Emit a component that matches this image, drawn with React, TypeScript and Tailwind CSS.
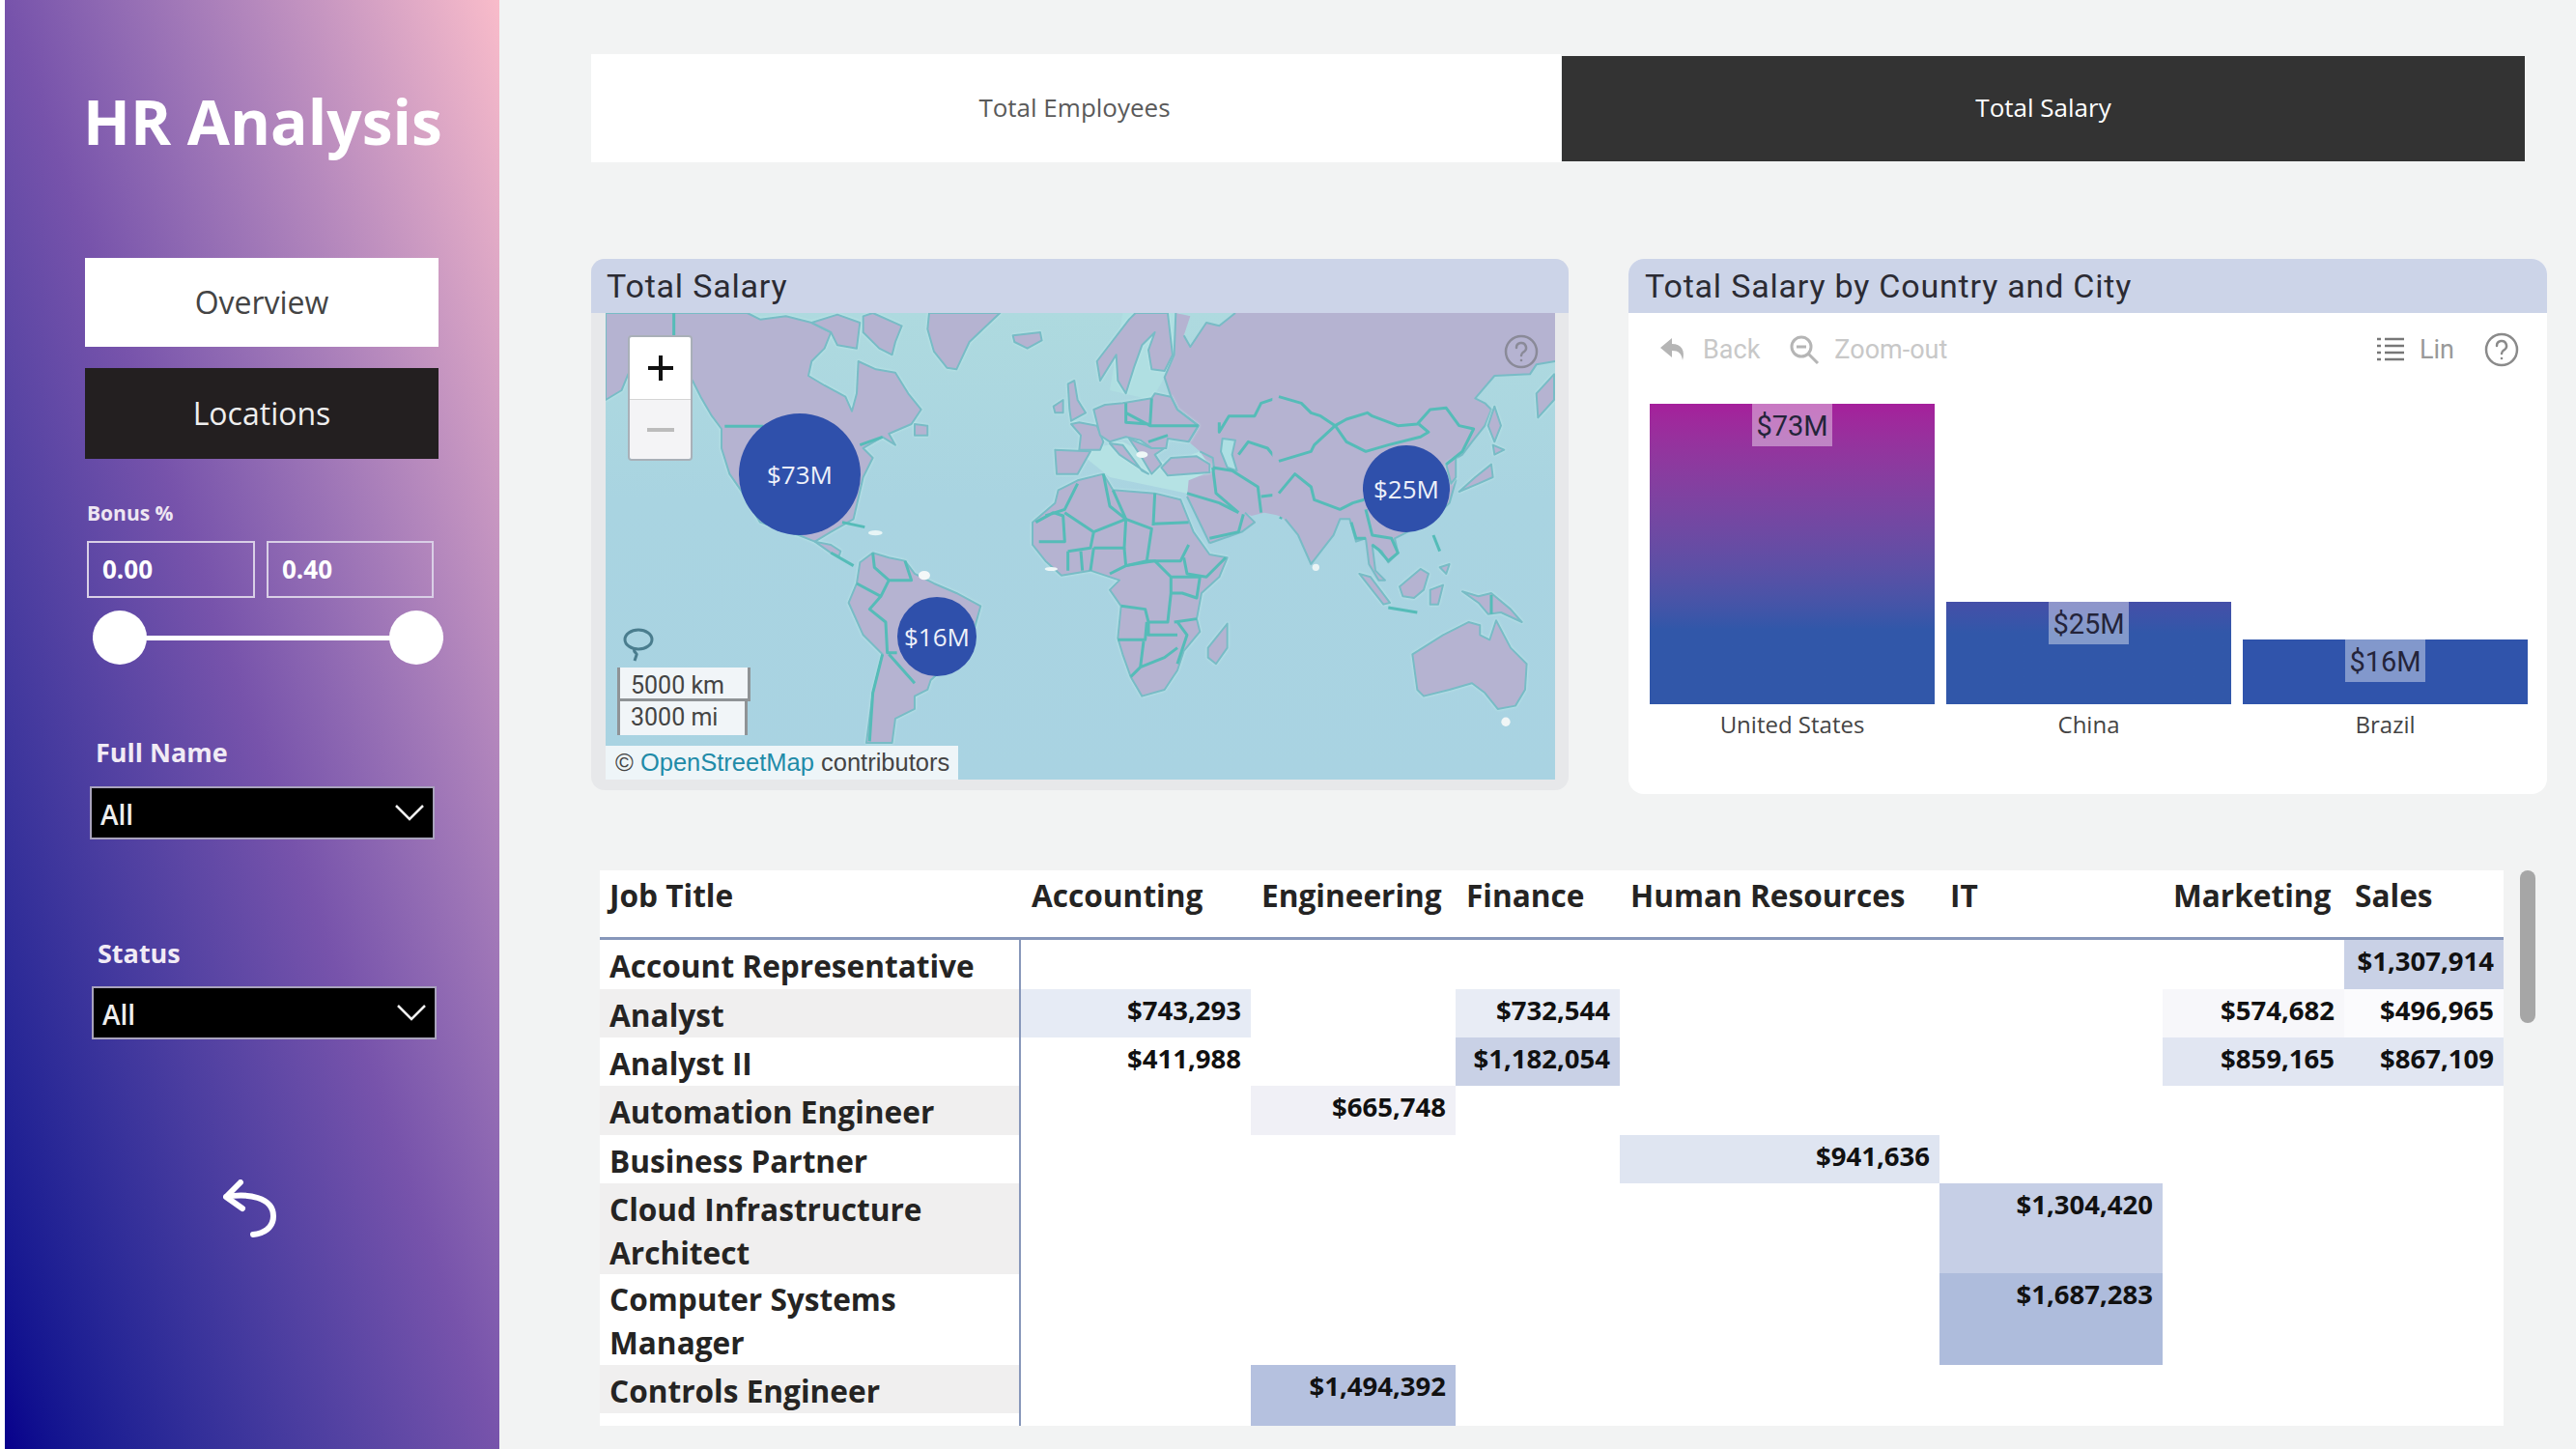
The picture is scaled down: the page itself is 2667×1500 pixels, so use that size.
function WorldMap() {
  const land = "#b5b3d1"
  const coast = "#78bcc6"
  const line = "#55bcb8"
  return (
    <svg viewBox="0 0 983 483" className="absolute inset-0 w-[983px] h-[483px] blur-[0.5px]">
      <defs>
        <linearGradient id="ocean" x1="0" y1="0" x2="0" y2="1">
          <stop offset="0" stopColor="#aedadf" />
          <stop offset="0.4" stopColor="#a9d4e1" />
          <stop offset="1" stopColor="#a9d3e2" />
        </linearGradient>
      </defs>
      <rect width="983" height="483" fill="url(#ocean)" />
      {/* Americas */}
      <g transform="scale(0.3333)">
        <g fill={land} stroke={coast} strokeWidth="6" strokeLinejoin="round" className="drop-shadow-[0_0_4px_#c0eaea]">
          <path d="M0,0 L440,0 L480,20 L560,10 L640,30 L700,60 L680,110 L640,150 L630,195 L680,225 L745,260 L765,305 L780,250 L785,150 L840,175 L900,185 L940,250 L980,300 L950,345 L880,375 L900,410 L860,385 L800,420 L830,450 L800,510 L770,640 L700,680 L650,710 L600,690 L480,650 L420,550 L385,500 L360,420 L360,360 L330,320 L295,260 L270,210 L240,170 L70,190 L50,240 L0,270 Z" />
          <path d="M640,30 L720,5 L790,30 L780,110 L720,100 L700,60 Z" />
          <path d="M800,10 L830,0 L920,40 L900,90 L890,130 L850,110 L800,60 Z" />
          <path d="M1005,0 L1225,0 L1130,90 L1090,175 L1060,170 L1020,120 L1000,50 Z" />
          <path d="M1265,70 L1350,60 L1355,85 L1310,110 L1270,90 Z" />
          <path d="M960,345 L1000,350 L1000,380 L960,380 Z" />
          <path d="M650,710 L700,720 L730,740 L725,755 L700,745 Z" />
          <path d="M790,775 L830,745 L880,760 L930,770 L960,810 L1020,840 L1090,870 L1165,910 L1140,1000 L1100,1060 L1010,1140 L1000,1170 L960,1190 L960,1230 L900,1260 L890,1335 L810,1335 L830,1180 L860,1060 L800,1000 L755,900 L780,840 Z" />
        </g>
        <g fill="none" stroke={line} strokeWidth="9" strokeLinejoin="round">
          <path d="M212,0 L212,70 M370,352 L490,352 M790,410 L860,385" />
          <path d="M700,745 L770,785 M735,650 L805,665" />
          <path d="M830,745 L835,790 L880,830 L855,880 L780,840 M930,770 L950,830 L880,830 M855,880 L820,920 L870,960 L875,1055 L905,1055" />
          <path d="M860,1060 L830,1180 L820,1330 M880,1060 L960,1150" />
        </g>
        <ellipse cx="838" cy="683" rx="22" ry="8" fill="#e8f5f6" />
        <ellipse cx="990" cy="815" rx="18" ry="14" fill="#f4f8f8" />
      </g>
      {/* Mediterranean, Europe, Africa, West Asia */}
      <g transform="translate(422,0) scale(0.3333)">
        <path d="M200,430 L340,400 L480,470 L580,430 L620,490 L540,560 L300,510 Z" fill="#b5e2e4" />
        <path d="M520,0 L340,0 L300,240 L430,270 L470,200 Z" fill="#b0dfe2" />
        <path d="M505,0 L550,10 L530,70 L550,105 L600,30 L640,40 L690,0 L900,0 L900,650 L860,660 L830,630 L780,620 L740,630 L720,620 L750,650 L710,680 L610,715 L540,570 L545,520 L620,490 L580,430 L545,400 L575,350 L510,300 L490,260 L470,200 L500,130 Z" fill={land} />
        <path d="M650,390 L690,395 L680,440 L695,490 L665,480 L645,430 Z" fill="#addfe3" />
        <g fill={land} stroke={coast} strokeWidth="6" strokeLinejoin="round" className="drop-shadow-[0_0_4px_#c0eaea]">
          <path d="M60,650 L130,590 L140,550 L200,520 L280,500 L310,550 L440,560 L520,580 L560,680 L610,750 L665,760 L640,820 L585,870 L570,950 L580,990 L530,1050 L510,1110 L470,1170 L400,1190 L365,1130 L340,1060 L325,1010 L335,910 L300,860 L330,830 L240,800 L150,815 L100,770 L60,720 Z" />
          <path d="M260,150 L360,20 L380,0 L480,0 L495,130 L470,180 L430,175 L420,115 L440,60 L400,100 L375,170 L350,250 L325,210 L320,130 L270,210 Z" />
          <path d="M130,425 L240,430 L200,500 L135,500 Z" />
          <path d="M205,340 L260,350 L280,400 L270,425 L205,425 L210,380 L180,345 Z" />
          <path d="M170,220 L190,210 L200,270 L225,310 L180,335 L175,300 Z" />
          <path d="M125,290 L155,270 L155,310 L130,310 Z" />
          <path d="M250,300 L285,285 L340,280 L430,265 L440,250 L490,260 L510,300 L575,350 L545,400 L480,390 L475,420 L430,420 L395,395 L350,385 L300,400 L270,380 Z" />
          <path d="M300,405 L340,410 L400,490 L420,500 L390,480 L330,440 Z" />
          <path d="M360,390 L430,420 L470,420 L440,440 L460,470 L430,500 L400,450 Z" />
          <path d="M460,480 L490,450 L570,445 L610,470 L610,495 L540,500 L480,505 Z" />
          <path d="M605,1040 L665,965 L665,1040 L630,1090 L605,1070 Z" />
        </g>
        <g fill="none" stroke={coast} strokeWidth="6" strokeLinejoin="round">
          <path d="M505,0 L500,130 L470,200 L490,260 L510,300 L575,350 L545,400 M580,430 L620,450 L625,490 M610,715 L710,680 L750,650 L720,620 M540,570 L610,715 M530,70 L550,105 L600,30 L640,40 L690,0" />
          <path d="M650,390 L690,395 L680,440 L695,490 L665,480 L645,430 Z" />
        </g>
        <g fill="none" stroke={line} strokeWidth="9" strokeLinejoin="round">
          <path d="M100,630 L160,610 L200,530 M280,500 L300,600 L350,640 L250,680 L160,620 M250,680 L240,730 L170,740 M70,650 L125,620 L155,630 L160,710 L80,710" />
          <path d="M350,640 L345,730 L250,730 M350,640 L430,670 L415,770 L350,785 M310,550 L350,640 M440,560 L435,660 M435,655 L545,650 M415,770 L440,770 L520,770 L545,720" />
          <path d="M530,760 L540,810 L600,820 L660,760 M250,730 L240,800 M345,730 L350,785 L300,810" />
          <path d="M350,785 L440,770 L490,820 L490,870 L480,960 L420,960 L410,920 L335,910 M490,820 L580,820 L570,885 L525,870 L490,870 M570,950 L500,960" />
          <path d="M325,1015 L410,1015 L415,960 M420,960 L420,1000 L510,1000 M405,1020 L395,1100 L470,1070 L510,1040 M365,1130 L395,1100 M510,960 L540,1000 L510,1090" />
          <path d="M170,740 L170,800 M210,740 L215,800" />
          <path d="M430,265 L425,350 L350,310 M350,280 L350,340 L420,345 M425,350 L575,350 M420,400 L480,380" />
          <path d="M620,480 L630,560 L700,620 M620,480 L680,490 L760,540 L770,620 M540,560 L640,590 L700,620 M610,700 L700,680 L715,625" />
          <path d="M640,340 L640,370 L670,320 L750,320 L770,280 L830,260 L870,270 M700,440 L730,400 L790,420 L830,470 M770,570 L850,560 L870,500 M830,640 L850,590 L860,520 L830,480 L870,440" />
          <path d="M825,455 L870,445 L870,480 L830,475 Z" fill={line} />
        </g>
        <ellipse cx="400" cy="440" rx="18" ry="10" fill="#eef7f7" />
        <ellipse cx="118" cy="795" rx="20" ry="6" fill="#eef7f7" />
      </g>
      {/* East Asia, Australia */}
      <g transform="translate(697,0) scale(0.3333)">
        <path d="M-20,0 L860,0 L860,150 L800,160 L780,190 L670,195 L610,265 L640,280 L660,300 L640,350 L600,400 L570,440 L520,470 L550,520 L530,590 L480,640 L400,680 L360,700 L370,745 L340,775 L320,740 L290,720 L300,800 L330,830 L310,830 L280,780 L270,700 L240,710 L220,640 L190,640 L170,690 L100,780 L60,690 L20,640 L-20,620 Z" fill={land} />
        <path d="M860,150 L800,160 L780,190 L670,195 L610,265 L640,280 L660,300 L640,350 L600,400 L570,440 L520,470 L550,520 L530,590 L480,640 L400,680 L360,700 L370,745 L340,775 L320,740 L290,720 L300,800 L330,830 L310,830 L280,780 L270,700 L240,710 L220,640 L190,640 L170,690 L100,780 L60,690 L20,640" fill="none" stroke={coast} strokeWidth="6" strokeLinejoin="round" />
        <g fill={land} stroke={coast} strokeWidth="6" strokeLinejoin="round" className="drop-shadow-[0_0_4px_#c0eaea]">
          <path d="M800,250 L855,190 L855,270 L805,325 Z" />
          <path d="M560,555 L610,510 L660,470 L665,510 L620,530 Z" />
          <path d="M665,410 L700,425 L670,440 Z" />
          <path d="M670,290 L690,350 L670,400 L650,350 Z" />
          <path d="M520,470 L550,450 L550,510 L535,530 Z" />
          <path d="M500,790 L530,780 L520,810 Z" />
          <path d="M375,850 L440,795 L465,810 L450,860 L420,885 L385,880 Z" />
          <path d="M470,860 L510,845 L495,905 L470,905 Z" />
          <path d="M250,810 L285,820 L345,900 L325,905 Z" />
          <path d="M570,865 L620,880 L660,870 L720,920 L755,960 L690,930 L650,935 L620,900 Z" />
          <path d="M415,1060 L510,1000 L590,960 L625,970 L625,1000 L655,1015 L675,955 L720,1040 L770,1090 L765,1170 L735,1220 L680,1230 L640,1180 L600,1150 L530,1170 L450,1190 L430,1170 Z" />
        </g>
        <g fill="none" stroke={line} strokeWidth="9" strokeLinejoin="round">
          <path d="M0,260 L70,280 L100,310 L130,320 L175,350 L210,330 L275,310 L290,320 L370,350 L430,345 L470,300 L520,295 L560,350 L605,360 L570,430 L520,470" />
          <path d="M175,350 L210,400 L270,430 L340,410 L440,385 L465,370 L435,345 M175,350 L110,410 L100,430 L0,460" />
          <path d="M0,560 L50,500 L100,540 L110,580 L190,610 L230,590 L265,580 M225,650 L240,700 L270,700 M270,610 L290,690 L350,700 L370,745 L340,770 L310,735 L290,720" />
          <path d="M480,690 L500,740 M340,915 L430,930 M660,875 L660,935" />
        </g>
        <circle cx="705" cy="1270" r="14" fill="#f1f6f6" />
        <circle cx="115" cy="790" r="11" fill="#eaf4f5" />
      </g>
    </svg>
  )
}

function HelpIcon({ className }: { className: string }) {
  return (
    <svg viewBox="0 0 36 36" className={className} fill="none" stroke="currentColor" strokeWidth="2.5">
      <circle cx="18" cy="18" r="16" />
      <path d="M13 14a5 5 0 1 1 7.5 4.3c-1.6 1-2.5 1.8-2.5 3.7" strokeLinecap="round" />
      <circle cx="18" cy="27" r="1.3" fill="currentColor" stroke="none" />
    </svg>
  )
}

function Bubble({ label, className }: { label: string; className: string }) {
  return (
    <div className={`absolute rounded-full bg-[#2f50ab] flex items-center justify-center text-[26px] text-[#eef1fa] ${className}`}>
      {label}
    </div>
  )
}

function MapCard() {
  return (
    <div className="w-[1012px] h-[550px] rounded-[14px] bg-[#e7e8ea] overflow-hidden flex flex-col">
      <div className="h-[56px] bg-[#ccd4e8] pl-[16px] flex items-center text-[34px] tracking-[0.8px] text-[#2b2b33] font-['Roboto',sans-serif]">
        Total Salary
      </div>
      <div className="relative ml-[15px] w-[983px] h-[483px] overflow-hidden">
        <WorldMap />
        <Bubble label="$73M" className="left-[138px] top-[104px] w-[126px] h-[126px]" />
        <Bubble label="$25M" className="left-[784px] top-[137px] w-[90px] h-[90px]" />
        <Bubble label="$16M" className="left-[302px] top-[294px] w-[82px] h-[82px]" />
        <HelpIcon className="absolute left-[930px] top-[22px] w-[36px] h-[36px] text-[#8a8a98]" />
        <div className="absolute left-[23px] top-[23px] w-[67px] h-[130px] rounded-[4px] border-2 border-[#a9b0b8] overflow-hidden flex flex-col">
          <div className="h-[65px] bg-white border-b border-[#d5d5d5] flex items-center justify-center">
            <svg viewBox="0 0 28 28" className="w-[28px] h-[28px]" fill="none" stroke="#111" strokeWidth="4">
              <path d="M14 1v26M1 14h26" />
            </svg>
          </div>
          <div className="flex-1 bg-[#f4f4f6] flex items-center justify-center">
            <div className="w-[28px] h-[4px] bg-[#bcbcbc]" />
          </div>
        </div>
        <svg viewBox="0 0 32 36" className="absolute left-[18px] top-[326px] w-[32px] h-[36px]" fill="none" stroke="#4a7d8e" strokeWidth="3">
          <ellipse cx="16" cy="12" rx="14" ry="10" />
          <path d="M12 22c-2 3 3 4 2 6l-2 6" />
        </svg>
        <div className="absolute left-[12px] top-[367px] flex flex-col text-[25px] leading-[34px] text-[#444] font-['Roboto',sans-serif]">
          <div className="w-[138px] h-[35px] bg-[#f1f5f8] border-x-[3px] border-b-[3px] border-[#8f9396] pl-[11px] pt-[2px]">5000 km</div>
          <div className="w-[135px] h-[35px] bg-[#f1f5f8] border-x-[3px] border-[#8f9396] pl-[11px]">3000 mi</div>
        </div>
        <div className="absolute left-0 bottom-0 w-[365px] h-[35px] bg-[#eef5f8] pl-[10px] text-[25.5px] leading-[35px] whitespace-nowrap text-[#444] font-['Liberation_Sans',sans-serif]">
          © <span className="text-[#1f8ba8]">OpenStreetMap</span> contributors
        </div>
      </div>
    </div>
  )
}

function Bar({ name, value, barClass }: { name: string; value: string; barClass: string }) {
  return (
    <div className="w-[295px] flex flex-col items-center">
      <div className={`w-full flex justify-center ${barClass}`}>
        <div className="w-[83px] h-[44px] pt-[3px] bg-white/40 flex items-center justify-center text-[29px] text-[#24243a] font-['Roboto',sans-serif]">
          {value}
        </div>
      </div>
      <div className="h-[42px] pt-[4px] text-[24px] leading-[34px] text-[#444]">{name}</div>
    </div>
  )
}

function BarCard() {
  return (
    <div className="w-[951px] h-[554px] rounded-[16px] bg-white overflow-hidden flex flex-col">
      <div className="h-[56px] bg-[#ccd4e8] pl-[17px] flex items-center text-[34px] tracking-[0.8px] text-[#2b2b33] font-['Roboto',sans-serif]">
        Total Salary by Country and City
      </div>
      <div className="h-[76px] pl-[32px] pr-[29px] flex items-center text-[27px] text-[#c8c8c8] font-['Roboto',sans-serif]">
        <svg viewBox="0 0 30 30" className="w-[30px] h-[30px]" fill="#b5b5b5">
          <path d="M13 3 1 13l12 10v-7c7 0 10 3 11 10 3-10-1-17-11-17Z" />
        </svg>
        <span className="ml-[15px]">Back</span>
        <svg viewBox="0 0 32 32" className="ml-[30px] w-[32px] h-[32px]" fill="none" stroke="#b5b5b5" strokeWidth="3">
          <circle cx="13" cy="13" r="10" />
          <path d="M20 20l10 10M8 13h10" />
        </svg>
        <span className="ml-[15px]">Zoom-out</span>
        <svg viewBox="0 0 28 28" className="ml-auto w-[28px] h-[28px]" fill="none" stroke="#777" strokeWidth="2.5">
          <path d="M8 3h20M8 10h20M8 17h20M8 24h20M0 3h4M0 10h4M0 17h4M0 24h4" />
        </svg>
        <span className="ml-[16px] text-[#999]">Lin</span>
        <HelpIcon className="ml-[31px] w-[36px] h-[36px] text-[#8a8a8a]" />
      </div>
      <div className="pl-[22px] flex items-end gap-[12px] h-[371px]">
        <Bar name="United States" value="$73M" barClass="h-[311px] bg-linear-to-b from-[#a51f9b] to-[#3157a9] to-[75%]" />
        <Bar name="China" value="$25M" barClass="h-[106px] bg-linear-to-b from-[#454fa8] to-[#3157a9] to-[30%]" />
        <Bar name="Brazil" value="$16M" barClass="h-[67px] bg-[#3054ab]" />
      </div>
    </div>
  )
}

type Cell = { text?: string; bg?: string }

const headers = ["Accounting", "Engineering", "Finance", "Human Resources", "IT", "Marketing", "Sales"]
const gridCols = "grid grid-cols-[436px_238px_212px_170px_331px_231px_188px_165px]"

const rows: { title: string[]; h: string; zebra?: boolean; cells: Cell[] }[] = [
  { title: ["Account Representative"], h: "h-[51px]", cells: [{}, {}, {}, {}, {}, {}, { text: "$1,307,914", bg: "bg-[#c9d1e6]" }] },
  { title: ["Analyst"], h: "h-[50px]", zebra: true, cells: [{ text: "$743,293", bg: "bg-[#e6ebf5]" }, {}, { text: "$732,544", bg: "bg-[#e8ecf5]" }, {}, {}, { text: "$574,682", bg: "bg-[#f7f7fa]" }, { text: "$496,965", bg: "bg-[#fbfbfd]" }] },
  { title: ["Analyst II"], h: "h-[50px]", cells: [{ text: "$411,988" }, {}, { text: "$1,182,054", bg: "bg-[#c9d1e6]" }, {}, {}, { text: "$859,165", bg: "bg-[#e1e6f2]" }, { text: "$867,109", bg: "bg-[#e1e6f2]" }] },
  { title: ["Automation Engineer"], h: "h-[51px]", zebra: true, cells: [{}, { text: "$665,748", bg: "bg-[#f0f0f6]" }, {}, {}, {}, {}, {}] },
  { title: ["Business Partner"], h: "h-[50px]", cells: [{}, {}, {}, { text: "$941,636", bg: "bg-[#dfe5f1]" }, {}, {}, {}] },
  { title: ["Cloud Infrastructure", "Architect"], h: "h-[93px]", zebra: true, cells: [{}, {}, {}, {}, { text: "$1,304,420", bg: "bg-[#c6cfe6]" }, {}, {}] },
  { title: ["Computer Systems", "Manager"], h: "h-[95px]", cells: [{}, {}, {}, {}, { text: "$1,687,283", bg: "bg-[#aebcdc]" }, {}, {}] },
  { title: ["Controls Engineer"], h: "h-[50px]", zebra: true, cells: [{}, { text: "$1,494,392", bg: "bg-[#b5c1df]" }, {}, {}, {}, {}, {}] },
]

function SalaryTable() {
  return (
    <div className="ml-[9px] mt-[79px] flex items-start">
      <div className="w-[1971px] h-[575px] bg-white overflow-hidden">
        <div className={`${gridCols} h-[72px] border-b-[3px] border-[#8797ba] text-[31.6px] leading-[44px] font-bold text-[#252423]`}>
          <div className="pl-[10px] pt-[4px]">Job Title</div>
          {headers.map((h) => (
            <div key={h} className="pl-[11px] pt-[4px] whitespace-nowrap">{h}</div>
          ))}
        </div>
        {rows.map((r) => (
          <div key={r.title[0]} className={`${gridCols} ${r.h}`}>
            <div className={`pl-[10px] pt-[4px] text-[31.6px] leading-[45px] font-bold text-[#252423] border-r-2 border-[#8797ba] ${r.zebra ? "bg-[#f0efef]" : ""}`}>
              {r.title.map((t) => (
                <div key={t} className="whitespace-nowrap">{t}</div>
              ))}
            </div>
            {r.cells.map((c, i) => (
              <div key={i} className={`pr-[10px] pt-[4px] text-right text-[27.5px] leading-[36px] font-bold text-[#111] ${c.bg ?? ""}`}>
                {c.text}
              </div>
            ))}
          </div>
        ))}
        <div className={`${gridCols} h-[13px]`}>
          <div className="border-r-2 border-[#8797ba]" />
          <div />
          <div className="bg-[#b5c1df]" />
        </div>
      </div>
      <div className="ml-[17px] w-[16px] h-[158px] rounded-full bg-[#a6a6a6]" />
    </div>
  )
}

function Filter({ className }: { className: string }) {
  return (
    <div className={`h-[55px] w-[357px] bg-black border-2 border-[#a9a3bd] flex items-center justify-between pl-[9px] pr-[9px] text-[28px] font-semibold text-[#eeeeee] ${className}`}>
      <span className="pt-[3px]">All</span>
      <svg viewBox="0 0 30 17" className="w-[30px] h-[17px]" fill="none" stroke="#f0f0f0" strokeWidth="2.5">
        <path d="M1 1l14 14L29 1" />
      </svg>
    </div>
  )
}

function Sidebar() {
  return (
    <div className="w-[512px] h-[1500px] ml-[5px] shrink-0 pl-[83px] flex flex-col items-start bg-linear-to-tr from-[#08008c] via-[#7753ab] to-[#f9bcca] text-white">
      <div className="mt-[86px] -ml-[2px] h-[81px] text-[64px] leading-[80px] font-bold whitespace-nowrap">HR Analysis</div>
      <div className="mt-[100px] w-[366px] h-[92px] bg-white flex items-center justify-center text-[32px] text-[#444444]">Overview</div>
      <div className="mt-[22px] w-[366px] h-[94px] bg-[#231f20] flex items-center justify-center text-[32px] text-[#eeeeee]">Locations</div>
      <div className="mt-[44px] ml-[2px] text-[21px] leading-[24px] font-bold text-[#eee6f2]">Bonus %</div>
      <div className="mt-[17px] ml-[2px] flex gap-[12px] text-[26px] font-bold">
        <div className="w-[174px] h-[59px] border-2 border-[#d9cfe6] pl-[14px] flex items-center">0.00</div>
        <div className="w-[173px] h-[59px] border-2 border-[#d9cfe6] pl-[14px] flex items-center">0.40</div>
      </div>
      <div className="relative mt-[13px] ml-[8px] w-[363px] h-[56px] flex items-center">
        <div className="w-full h-[5px] bg-white" />
        <div className="absolute left-0 top-0 w-[56px] h-[56px] rounded-full bg-white" />
        <div className="absolute right-0 top-0 w-[56px] h-[56px] rounded-full bg-white" />
      </div>
      <div className="mt-[74px] ml-[11px] text-[27px] leading-[34px] font-bold text-[#f1ebf5]">Full Name</div>
      <Filter className="mt-[18px] ml-[5px]" />
      <div className="mt-[101px] ml-[13px] text-[27px] leading-[34px] font-bold text-[#f1ebf5]">Status</div>
      <Filter className="mt-[17px] ml-[7px]" />
      <svg viewBox="0 0 55 60" className="mt-[145px] ml-[143px] w-[55px] h-[60px]" fill="none" stroke="white" strokeWidth="6" strokeLinecap="round">
        <path d="M3 18 18 3M3 18l17 12M3 18c22-4 49 0 49 20 0 12-10 18-21 19" />
      </svg>
    </div>
  )
}

export default function App() {
  return (
    <div className="w-[2667px] h-[1500px] overflow-hidden bg-[#f2f3f3] flex font-['Open_Sans',sans-serif]">
      <div className="w-[5px] -mr-[5px] bg-white shrink-0" />
      <Sidebar />
      <div className="pl-[95px] pt-[56px] flex flex-col items-start">
        <div className="flex items-center text-[26px]">
          <div className="w-[1004px] h-[112px] bg-white flex items-center justify-center pb-[2px] pr-[3px] text-[#5a5a5a]">Total Employees</div>
          <div className="ml-[1px] w-[997px] h-[109px] bg-[#333333] flex items-center justify-center pb-[2px] text-white">Total Salary</div>
        </div>
        <div className="mt-[100px] flex items-start gap-[62px]">
          <MapCard />
          <BarCard />
        </div>
        <SalaryTable />
      </div>
    </div>
  )
}
